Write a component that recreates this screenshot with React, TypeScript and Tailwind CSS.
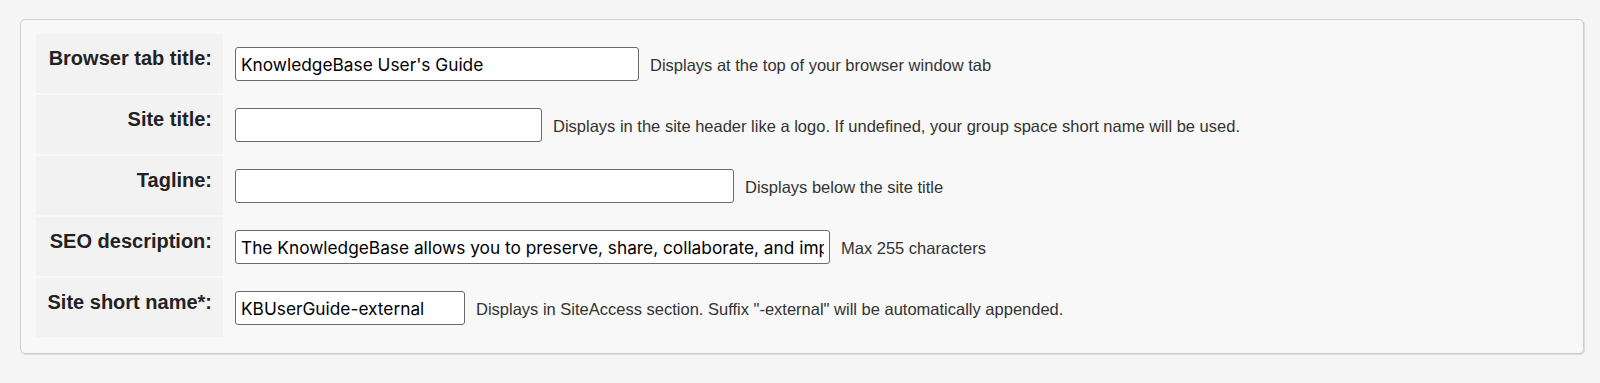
import React from 'react';

type Field = {
  label: string;
  value: string;
  width: string;
  hint: string;
};

const fields: Field[] = [
  { label: 'Browser tab title:', value: "KnowledgeBase User's Guide", width: 'w-[404px]', hint: 'Displays at the top of your browser window tab' },
  { label: 'Site title:', value: '', width: 'w-[307px]', hint: 'Displays in the site header like a logo. If undefined, your group space short name will be used.' },
  { label: 'Tagline:', value: '', width: 'w-[499px]', hint: 'Displays below the site title' },
  {
    label: 'SEO description:',
    value: 'The KnowledgeBase allows you to preserve, share, collaborate, and improve the knowledge of your organization.',
    width: 'w-[595px]',
    hint: 'Max 255 characters',
  },
  { label: 'Site short name*:', value: 'KBUserGuide-external', width: 'w-[230px]', hint: 'Displays in SiteAccess section. Suffix "-external" will be automatically appended.' },
];

const App: React.FC = () => {
  return (
    <div className="min-h-screen bg-[#f5f5f5] pt-[19px] pl-[20px] pr-[16px] font-['Liberation_Sans',Arial,sans-serif]">
      {/* Site settings panel */}
      <div className="rounded-[5px] border border-[#cfcfcf] bg-[#f8f8f8] pt-[14px] pb-[16px] px-[15px] shadow-[1px_1px_0_#dcdcdc]">
        <div className="flex flex-col gap-[2px]">
          {fields.map((f) => (
            <div key={f.label} className="flex items-center h-[59px]">
              <div className="w-[187px] self-stretch bg-[#f2f2f2] text-right pr-[11px] pt-[13px] text-[20px] leading-[23px] font-bold text-[#222]">
                {f.label}
              </div>
              <input
                type="text"
                defaultValue={f.value}
                className={`ml-[12px] mt-[1px] h-[34px] ${f.width} rounded-[3px] border border-[#6b6b6b] bg-white px-[5px] text-[17.3px] text-black font-['Inter',sans-serif] outline-none`}
              />
              <span className="ml-[11px] pt-[3px] text-[16.5px] text-[#333]">{f.hint}</span>
            </div>
          ))}
        </div>
      </div>
    </div>
  );
};

export default App;
